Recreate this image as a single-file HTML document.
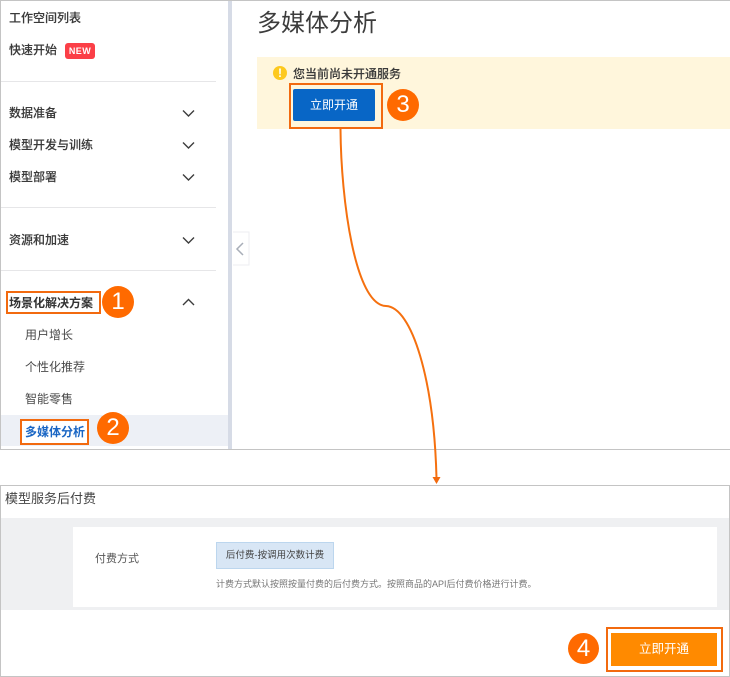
<!DOCTYPE html>
<html><head><meta charset="utf-8">
<style>
html,body{margin:0;padding:0;background:#fff}
body{width:730px;height:677px;position:relative;overflow:hidden;font-family:"Liberation Sans","Noto Sans CJK SC",sans-serif;color:#333}
div,span{position:absolute;box-sizing:border-box}
.t{white-space:nowrap;font-size:12px;line-height:16px;color:#4a4a4a}
.b{font-weight:500;color:#3a3a3a;-webkit-text-stroke:.12px #3a3a3a}
.hl{height:1px;left:1px;width:215px;background:#e6e6e8}
.box{border:2px solid #f26a0f}
.num{width:32px;height:32px;border-radius:50%;background:#ff6a00;color:#fff;font-size:24px;line-height:32px;text-align:center}
</style></head><body>

<!-- Top frame -->
<div style="left:0;top:0;width:730px;height:450px;border:1px solid #c4c4c4;border-right:0"></div>
<div style="left:228px;top:1px;width:4px;height:448px;background:#d6dbe6"></div>
<div style="left:1px;top:415px;width:227px;height:31px;background:#edf0f6"></div>

<div class="t b" style="left:9px;top:10px">工作空间列表</div>
<div class="t b" style="left:9px;top:42px">快速开始</div>
<div style="left:65px;top:43px;width:30px;height:16px;background:#fb3f47;border-radius:3px;color:#fff;font-size:9px;font-weight:700;line-height:16px;text-align:center;letter-spacing:.4px">NEW</div>
<div class="hl" style="top:81px"></div>
<div class="t b" style="left:9px;top:105px">数据准备</div>
<div class="t b" style="left:9px;top:137px">模型开发与训练</div>
<div class="t b" style="left:9px;top:169px">模型部署</div>
<div class="hl" style="top:207px"></div>
<div class="t b" style="left:9px;top:232px">资源和加速</div>
<div class="hl" style="top:270px"></div>
<div class="box" style="left:6px;top:291px;width:95px;height:23px"></div>
<div class="t" style="left:9px;top:295px;font-weight:700;color:#333">场景化解决方案</div>
<div class="t" style="left:25px;top:327px">用户增长</div>
<div class="t" style="left:25px;top:359px">个性化推荐</div>
<div class="t" style="left:25px;top:391px">智能零售</div>
<div class="box" style="left:20px;top:419px;width:69px;height:26px;background:#fff"></div>
<div class="t" style="left:25px;top:424px;font-weight:700;color:#1a66c4">多媒体分析</div>
<div class="num" style="left:102px;top:286px">1</div>
<div class="num" style="left:97px;top:412px">2</div>

<svg style="position:absolute;left:0;top:0" width="730" height="677" fill="none">
<g stroke="#3c3c3c" stroke-width="1.400">
<path d="M183 110.500l5.500 5.500 5.500-5.500"/>
<path d="M183 142.500l5.500 5.500 5.500-5.500"/>
<path d="M183 174.500l5.500 5.500 5.500-5.500"/>
<path d="M183 237.500l5.500 5.500 5.500-5.500"/>
<path d="M183 305l5.500-5.500 5.500 5.500"/>
</g>
<path d="M233 232h16v33h-16" fill="#fff" stroke="#eceef2"/>
<path d="M243 243l-6 6 6 6" stroke="#a8aeb8" stroke-width="1.500"/>
<path d="M340.500 129C341 200 355 305 386 306C412 307 434 380 436.500 478" stroke="#f5700f" stroke-width="2"/>
<path d="M432.500 477h8l-4 7z" fill="#f26a0f"/>
</svg>

<!-- Main -->
<div style="left:257px;top:7px;font-size:24px;line-height:34px;color:#3c3c3c;white-space:nowrap">多媒体分析</div>
<div style="left:257px;top:57px;width:473px;height:72px;background:#fff6dc"></div>
<div style="left:273px;top:66px;width:14px;height:14px;border-radius:50%;background:#fdc91f;color:#fff;font-size:12px;font-weight:700;line-height:14px;text-align:center">!</div>
<div class="t b" style="left:293px;top:66px">您当前尚未开通服务</div>
<div class="box" style="left:289px;top:83px;width:94px;height:46px"></div>
<div style="left:293px;top:89px;width:82px;height:32px;background:#0866c6;border-radius:2px;color:#fff;font-size:12px;line-height:32px;text-align:center">立即开通</div>
<div class="num" style="left:387px;top:89px">3</div>

<!-- Bottom frame -->
<div style="left:0;top:485px;width:730px;height:192px;border:1px solid #c4c4c4"></div>
<div class="t" style="left:5px;top:490px;font-size:13px;line-height:18px;color:#444">模型服务后付费</div>
<div style="left:1px;top:518px;width:728px;height:92px;background:#eff0f2"></div>
<div style="left:73px;top:527px;width:644px;height:80px;background:#fff"></div>
<div class="t" style="left:95px;top:551px;font-size:11px;color:#555">付费方式</div>
<div style="left:216px;top:542px;width:118px;height:27px;background:#d8e6f5;border:1px solid #bcd6ee;color:#444;font-size:9.500px;line-height:26px;text-align:center;white-space:nowrap">后付费-按调用次数计费</div>
<div class="t" style="left:216px;top:577px;font-size:9px;line-height:14px;color:#777">计费方式默认按照按量付费的后付费方式。按照商品的API后付费价格进行计费。</div>
<div class="num" style="left:568px;top:633px;width:31px;height:31px;line-height:31px">4</div>
<div class="box" style="left:606px;top:627px;width:117px;height:45px"></div>
<div style="left:611px;top:633px;width:106px;height:33px;background:#ff8a00;color:#fff;font-size:12.500px;line-height:33px;text-align:center">立即开通</div>

</body></html>
